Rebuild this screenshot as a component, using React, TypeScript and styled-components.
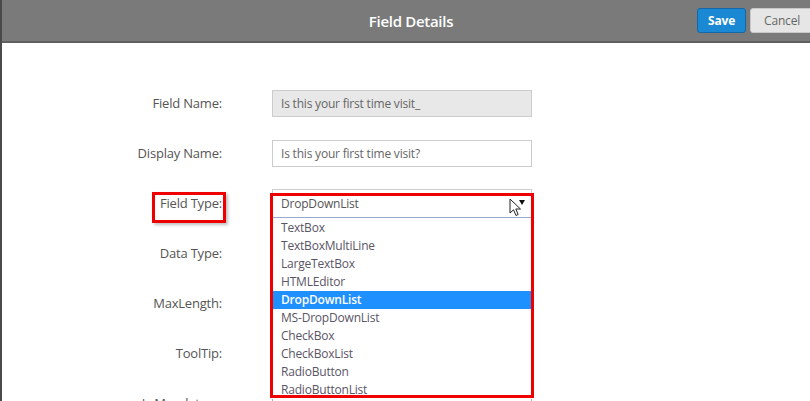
import { createGlobalStyle, styled } from 'styled-components';

const GlobalStyle = createGlobalStyle`
  html, body {
    margin: 0;
    padding: 0;
    height: 100%;
    overflow: hidden;
    background: #ffffff;
  }
  body {
    font-family: 'Open Sans', 'Noto Sans', sans-serif;
  }
`;

const Page = styled.div`
  height: 401px;
  border-left: 2px solid #4a4a4a;
  background: #ffffff;
  overflow: hidden;
`;

const Header = styled.header`
  display: grid;
  grid-template-columns: 1fr auto 1fr;
  align-items: center;
  height: 41px;
  background: #7a7a7a;
  border-bottom: 2px solid #5f5f5f;
`;

const Title = styled.h1`
  grid-column: 2;
  margin: 0 0 0 10px;
  font-size: 15px;
  font-weight: 600;
  color: #ffffff;
  letter-spacing: -0.3px;
`;

const Actions = styled.div`
  grid-column: 3;
  justify-self: end;
  display: flex;
  gap: 4px;
  margin-right: -4px;
`;

const Button = styled.button<{ $primary?: boolean }>`
  height: 25px;
  padding: 0 ${(p) => (p.$primary ? '10px' : '13px')};
  font-family: inherit;
  font-size: 12px;
  font-weight: ${(p) => (p.$primary ? 700 : 400)};
  border-radius: 3px;
  border: 1px solid ${(p) => (p.$primary ? '#1468a8' : '#c8c8c8')};
  background: ${(p) => (p.$primary ? '#1a88d2' : '#e6e6e6')};
  color: ${(p) => (p.$primary ? '#ffffff' : '#666666')};
  letter-spacing: -0.2px;
`;

const Form = styled.div`
  display: flex;
  flex-direction: column;
  padding-top: 35px;
`;

const Row = styled.div`
  display: grid;
  grid-template-columns: 220px 260px;
  column-gap: 50px;
  align-items: center;
  height: 50px;
`;

const Label = styled.label`
  position: relative;
  justify-self: end;
  font-size: 13px;
  color: #555555;
  letter-spacing: -0.2px;
`;

const LabelMark = styled.span`
  position: absolute;
  left: -8px;
  right: -4px;
  top: -2px;
  height: 31px;
  box-sizing: border-box;
  border: 3px solid #ee0000;
  box-shadow: 2px 2px 3px rgba(0, 0, 0, 0.25);
`;

const TextInput = styled.div<{ $disabled?: boolean }>`
  box-sizing: border-box;
  height: 27px;
  padding: 0 8px;
  display: flex;
  align-items: center;
  border: 1px solid #cccccc;
  background: ${(p) => (p.$disabled ? '#e8e8e8' : '#ffffff')};
  font-size: 12px;
  color: #666666;
  letter-spacing: -0.2px;
`;

const SelectWrap = styled.div`
  position: relative;
`;

const Select = styled.div`
  box-sizing: border-box;
  height: 29px;
  padding: 0 8px;
  display: flex;
  align-items: center;
  border: 1px solid #cfcfcf;
  border-bottom: 1px solid #9aaacc;
  background: #ffffff;
  font-size: 12px;
  color: #555555;
  letter-spacing: -0.2px;
`;

const Caret = styled.span`
  position: absolute;
  right: 7px;
  top: 11px;
  width: 0;
  height: 0;
  border-left: 3px solid transparent;
  border-right: 3px solid transparent;
  border-top: 5px solid #111111;
`;

const Pointer = styled.svg`
  position: absolute;
  right: 10px;
  top: 9px;
`;

const Menu = styled.ul`
  position: absolute;
  top: 29px;
  left: 0;
  right: 0;
  margin: 0;
  padding: 1px 0 0;
  list-style: none;
  background: #ffffff;
  z-index: 2;
`;

const MenuItem = styled.li<{ $active?: boolean }>`
  height: 18px;
  line-height: 18px;
  padding: 0 9px;
  font-size: 12px;
  letter-spacing: -0.2px;
  background: ${(p) => (p.$active ? '#1e90ff' : 'transparent')};
  color: ${(p) => (p.$active ? '#ffffff' : '#5a5566')};
  font-weight: ${(p) => (p.$active ? 600 : 400)};
`;

const MenuMark = styled.div`
  position: absolute;
  left: -2px;
  right: -2px;
  top: 4px;
  height: 205px;
  border: 3px solid #ee0000;
  box-sizing: border-box;
  z-index: 3;
  pointer-events: none;
`;

const BottomSelect = styled.div`
  position: relative;
  box-sizing: border-box;
  height: 27px;
  border: 1px solid #a8b0c0;
  background: #ffffff;

  &::after {
    content: '';
    position: absolute;
    right: 6px;
    top: 0;
    width: 5px;
    height: 4px;
    background: #444444;
  }
`;

const fieldTypes = [
  'TextBox',
  'TextBoxMultiLine',
  'LargeTextBox',
  'HTMLEditor',
  'DropDownList',
  'MS-DropDownList',
  'CheckBox',
  'CheckBoxList',
  'RadioButton',
  'RadioButtonList',
];

export default function App() {
  return (
    <>
      <GlobalStyle />
      <Page>
        <Header>
          <Title>Field Details</Title>
          <Actions>
            <Button $primary>Save</Button>
            <Button>Cancel</Button>
          </Actions>
        </Header>
        <Form>
          <Row>
            <Label>Field Name:</Label>
            <TextInput $disabled>Is this your first time visit_</TextInput>
          </Row>
          <Row>
            <Label>Display Name:</Label>
            <TextInput>Is this your first time visit?</TextInput>
          </Row>
          <Row>
            <Label>
              Field Type:
              <LabelMark />
            </Label>
            <SelectWrap>
              <Select>DropDownList</Select>
              <Caret />
              <Pointer width="13" height="19" viewBox="0 0 13 19">
                <path
                  d="M1 1 L1 15 L4.5 11.8 L7 17.5 L9.2 16.5 L6.8 11 L11.5 11 Z"
                  fill="#ffffff"
                  stroke="#222222"
                  strokeWidth="1"
                  strokeLinejoin="round"
                />
              </Pointer>
              <Menu>
                {fieldTypes.map((t) => (
                  <MenuItem key={t} $active={t === 'DropDownList'}>
                    {t}
                  </MenuItem>
                ))}
              </Menu>
              <MenuMark />
            </SelectWrap>
          </Row>
          <Row>
            <Label>Data Type:</Label>
            <div />
          </Row>
          <Row>
            <Label>MaxLength:</Label>
            <div />
          </Row>
          <Row>
            <Label>ToolTip:</Label>
            <div />
          </Row>
          <Row>
            <Label>Is Mandatory:</Label>
            <BottomSelect />
          </Row>
        </Form>
      </Page>
    </>
  );
}
